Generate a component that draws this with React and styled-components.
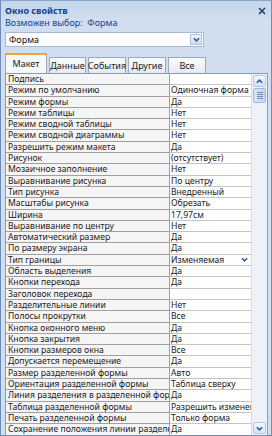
import React from 'react';
import styled, { createGlobalStyle } from 'styled-components';

const GlobalStyle = createGlobalStyle`
  body {
    margin: 0;
    background: #d1deef;
    font-family: "Noto Sans", "DejaVu Sans", sans-serif;
  }
`;

const Window = styled.div`
  width: 272px;
  height: 436px;
  box-sizing: border-box;
  border: 1px solid #6d8cb8;
  border-top-color: #8aa6cc;
  background: #d1deef;
  display: flex;
  flex-direction: column;
  overflow: hidden;
`;

const TitleBar = styled.div`
  height: 16px;
  box-sizing: border-box;
  padding: 3px 5px 0 4px;
  display: flex;
  align-items: center;
  justify-content: space-between;
  background: linear-gradient(#c6d7ec, #cddbee);
`;

const Title = styled.div`
  font-size: 9px;
  font-weight: 700;
  color: #15428b;
`;

const Close = styled.svg`
  width: 8px;
  height: 8px;
`;

const Caption = styled.div`
  font-size: 9px;
  color: #15428b;
  padding: 0 4px;
  height: 12px;
  line-height: 12px;
`;

const Combo = styled.div`
  margin: 3px 0 0 4px;
  width: 199px;
  height: 15px;
  box-sizing: border-box;
  border: 1px solid #a5b9d5;
  background: #fff;
  display: flex;
  align-items: center;
  justify-content: space-between;
  font-size: 9px;
  color: #111;
  padding-left: 3px;
`;

const DropButton = styled.div`
  width: 12px;
  height: 11px;
  margin-right: 1px;
  display: flex;
  align-items: center;
  justify-content: center;
  background: linear-gradient(#eef4fb, #c9daf0);
  border: 1px solid #b0c4df;
  box-sizing: border-box;
`;

const Tabs = styled.div`
  display: flex;
  align-items: flex-end;
  gap: 2px;
  margin-top: 5px;
  padding-left: 4px;
  height: 21px;
  box-sizing: border-box;
`;

const Tab = styled.div`
  height: ${({ $active }) => ($active ? '20px' : '16px')};
  width: ${({ $w }) => $w}px;
  box-sizing: border-box;
  font-size: 9px;
  color: #1a1a1a;
  display: flex;
  align-items: center;
  justify-content: center;
  border: 1px solid #9aa8bb;
  border-bottom: none;
  background: ${({ $active }) =>
    $active ? '#f6f8fb' : 'linear-gradient(#fbfbfc, #e6e9ee)'};
  border-top: ${({ $active }) => ($active ? '2px solid #f2a33a' : '1px solid #9aa8bb')};
  padding-bottom: ${({ $active }) => ($active ? '2px' : '0')};
`;

const Frame = styled.div`
  flex: 1;
  margin: 0 3px 0 4px;
  border: 1px solid #8b9bb4;
  border-bottom: none;
  background: #fff;
  display: flex;
  overflow: hidden;
`;

const Grid = styled.div`
  flex: 1;
  display: grid;
  grid-template-columns: 164px 1fr;
  grid-auto-rows: 11.3px;
  align-content: start;
`;

const NameCell = styled.div`
  font-size: 8.6px;
  line-height: 10.3px;
  color: #1a1a1a;
  background: #f5f5f5;
  border-bottom: 1px solid #a0a0a0;
  border-right: 1px solid #a0a0a0;
  padding-left: 2px;
  white-space: nowrap;
  overflow: hidden;
`;

const ValueCell = styled.div`
  font-size: 8.6px;
  line-height: 10.3px;
  color: #1a1a1a;
  background: #fff;
  border-bottom: 1px solid #c4c4c4;
  padding-left: 1px;
  white-space: nowrap;
  overflow: hidden;
  display: flex;
  align-items: center;
  justify-content: space-between;
`;

const DropMark = styled.span`
  display: flex;
  margin-right: 3px;
`;

const Scrollbar = styled.div`
  width: 15px;
  background: #eef2f8;
  border-left: 1px solid #d4dce8;
  display: flex;
  flex-direction: column;
  align-items: center;
  padding-top: 1px;
`;

const ScrollButton = styled.div`
  width: 13px;
  height: 12px;
  box-sizing: border-box;
  border: 1px solid #b6c8e2;
  border-radius: 2px;
  background: linear-gradient(#f2f7fd, #d3e2f5);
  display: flex;
  align-items: center;
  justify-content: center;
  margin-bottom: 1px;
`;

const Thumb = styled.div`
  width: 13px;
  height: 15px;
  box-sizing: border-box;
  border: 1px solid #9fb8dc;
  border-radius: 2px;
  background: linear-gradient(90deg, #d6e4f6, #c3d6f0);
  display: flex;
  flex-direction: column;
  align-items: center;
  justify-content: center;
  gap: 1px;
`;

const Grip = styled.span`
  width: 6px;
  height: 1px;
  background: #6f8fbf;
`;

const Track = styled.div`
  flex: 1;
`;

const Chevron = ({ up, size = 7 }) => (
  <svg width={size} height={size} viewBox="0 0 8 8">
    <path
      d={up ? 'M1 5.5 L4 2.5 L7 5.5' : 'M1 2.5 L4 5.5 L7 2.5'}
      fill="none"
      stroke="#2b5aa6"
      strokeWidth="1.8"
    />
  </svg>
);

const rows = [
  ['Подпись', ''],
  ['Режим по умолчанию', 'Одиночная форма'],
  ['Режим формы', 'Да'],
  ['Режим таблицы', 'Нет'],
  ['Режим сводной таблицы', 'Нет'],
  ['Режим сводной диаграммы', 'Нет'],
  ['Разрешить режим макета', 'Да'],
  ['Рисунок', '(отсутствует)'],
  ['Мозаичное заполнение', 'Нет'],
  ['Выравнивание рисунка', 'По центру'],
  ['Тип рисунка', 'Внедренный'],
  ['Масштабы рисунка', 'Обрезать'],
  ['Ширина', '17,97см'],
  ['Выравнивание по центру', 'Нет'],
  ['Автоматический размер', 'Да'],
  ['По размеру экрана', 'Да'],
  ['Тип границы', 'Изменяемая', true],
  ['Область выделения', 'Да'],
  ['Кнопки перехода', 'Да'],
  ['Заголовок перехода', ''],
  ['Разделительные линии', 'Нет'],
  ['Полосы прокрутки', 'Все'],
  ['Кнопка оконного меню', 'Да'],
  ['Кнопка закрытия', 'Да'],
  ['Кнопки размеров окна', 'Все'],
  ['Допускается перемещение', 'Да'],
  ['Размер разделенной формы', 'Авто'],
  ['Ориентация разделенной формы', 'Таблица сверху'],
  ['Линия разделения в разделенной форме', 'Да'],
  ['Таблица разделенной формы', 'Разрешить изменения'],
  ['Печать разделенной формы', 'Только форма'],
  ['Сохранение положения линии разделения', 'Да'],
];

const tabs = [
  ['Макет', 42],
  ['Данные', 37],
  ['События', 38],
  ['Другие', 38],
  ['Все', 38],
];

export default function App() {
  return (
    <>
      <GlobalStyle />
      <Window>
        <TitleBar>
          <Title>Окно свойств</Title>
          <Close viewBox="0 0 8 8">
            <path d="M1 1 L7 7 M7 1 L1 7" stroke="#2a3f63" strokeWidth="1.6" />
          </Close>
        </TitleBar>
        <Caption>Возможен выбор:&nbsp; Форма</Caption>
        <Combo>
          Форма
          <DropButton>
            <Chevron />
          </DropButton>
        </Combo>
        <Tabs>
          {tabs.map(([t, w], i) => (
            <Tab key={t} $w={w} $active={i === 0}>
              {t}
            </Tab>
          ))}
        </Tabs>
        <Frame>
          <Grid>
            {rows.map(([name, value, drop]) => (
              <React.Fragment key={name}>
                <NameCell>{name}</NameCell>
                <ValueCell>
                  {value}
                  {drop && (
                    <DropMark>
                      <Chevron />
                    </DropMark>
                  )}
                </ValueCell>
              </React.Fragment>
            ))}
          </Grid>
          <Scrollbar>
            <ScrollButton>
              <Chevron up />
            </ScrollButton>
            <Thumb>
              <Grip />
              <Grip />
              <Grip />
              <Grip />
            </Thumb>
            <Track />
            <ScrollButton>
              <Chevron />
            </ScrollButton>
          </Scrollbar>
        </Frame>
      </Window>
    </>
  );
}
